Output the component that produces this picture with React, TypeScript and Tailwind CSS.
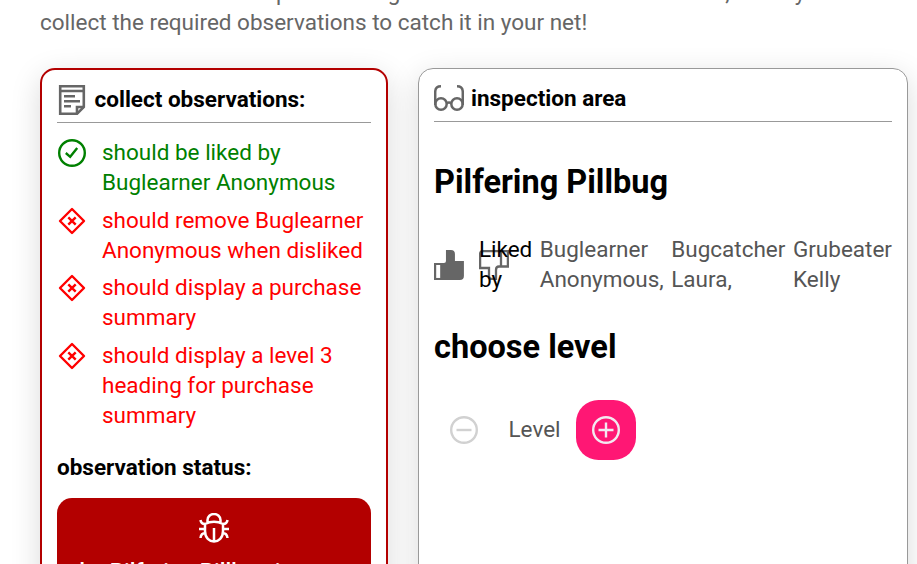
import React from "react";

const observations = [
  { ok: true, text: "should be liked by Buglearner Anonymous" },
  { ok: false, text: "should remove Buglearner Anonymous when disliked" },
  { ok: false, text: "should display a purchase summary" },
  { ok: false, text: "should display a level 3 heading for purchase summary" },
];

function Note() {
  return (
    <svg className="mt-px h-[30px] w-[30px] shrink-0" viewBox="0 0 30 30" fill="none" stroke="#666" strokeWidth="2.6">
      <path d="M3.2 1.2H26.8V22L20 28.8H3.2Z" />
      <path d="M3 6H27M7 11.2H18M7 16.2H23M7 21.2H14M20 29V22H27" />
    </svg>
  );
}

function Glasses() {
  return (
    <svg className="mt-[2px] h-[30px] w-[30px] shrink-0" viewBox="0 0 30 30" fill="none" stroke="#666" strokeWidth="2.5">
      <circle cx="7" cy="19" r="5.7" />
      <circle cx="23" cy="19" r="5.7" />
      <path d="M12.5 18Q15 17 17.5 18M1.2 20V7Q1.2 1.3 7 1.3M28.8 20V7Q28.8 1.3 23 1.3" />
    </svg>
  );
}

function StateIcon({ ok }: { ok: boolean }) {
  return ok ? (
    <svg className="h-[30px] w-[30px] shrink-0" viewBox="0 0 30 30" fill="none" stroke="currentColor" strokeWidth="2.4">
      <circle cx="15" cy="15" r="12.8" />
      <path d="M8.8 15L13.2 18.8L20.2 10" />
    </svg>
  ) : (
    <svg className="h-[30px] w-[30px] shrink-0" viewBox="0 0 30 30" fill="none" stroke="currentColor" strokeWidth="2.4" strokeLinejoin="round">
      <path d="M15 3L27 15L15 27L3 15ZM11.3 11.3L18.7 18.7M18.7 11.3L11.3 18.7" />
    </svg>
  );
}

function Bug() {
  return (
    <svg className="h-[30px] w-[30px] shrink-0" viewBox="0 0 30 30" fill="none" stroke="white" strokeWidth="2.5">
      <path d="M8.5 9V7A6.5 6 0 0 1 21.5 7V9M6 11Q15 6.5 24 11V18C24 32 6 32 6 18ZM15 15V29M6 16H0M24 16H30M6 11Q2 11 1.5 7M24 11Q28 11 28.5 7M6.5 20Q2 20 1.5 25M23.5 20Q28 20 28.5 25" />
    </svg>
  );
}

function ThumbUp() {
  return (
    <svg className="mt-[2px] h-[30px] w-[30px]" viewBox="0 0 30 30">
      <path d="M0 13H10Q12 13 12 11V0H17Q21 0 21 4V11H30V26Q30 30 26 30H0Z" fill="#666" />
      <path d="M2.2 15H6.2V28H2.2Z" fill="white" />
    </svg>
  );
}

function ThumbDown() {
  return (
    <svg className="mt-[2px] h-[30px] w-[30px]" viewBox="0 0 30 30" fill="none" stroke="#666" strokeWidth="2.3">
      <path d="M28.9 1.1H4Q1.1 1.1 1.1 4V18H10V26Q10 29 13 29H17V20Q17 16.5 20 16.5H28.9ZM22 1V16.5" />
    </svg>
  );
}

export default function App() {
  return (
    <div className="h-[564px] w-[917px] overflow-hidden bg-white font-['Roboto',sans-serif] text-[22.5px] leading-[30px] text-[#666]">
      <div className="-mt-[23px] ml-10 h-[60px] whitespace-nowrap">
        <div className="flex h-[30px]">
          <span className="ml-[236px]">p</span>
          <span className="ml-[99px]">g</span>
          <span className="ml-[325px]">,</span>
          <span className="ml-[65px]">y</span>
        </div>
        <p>collect the required observations to catch it in your net!</p>
      </div>
      <main className="ml-10 mt-[31px] flex h-[700px] gap-[30px]">
        <section className="w-[348px] shrink-0 rounded-[15px] border-2 border-[#b30000] p-[15px] pt-[14px] shadow-[0_8px_30px_rgba(0,0,0,0.15)]">
          <h2 className="flex h-[39px] gap-[7.5px] border-b border-[#999] font-bold text-black">
            <Note />
            <span>collect observations:</span>
          </h2>
          <ul className="mt-[14px] flex flex-col gap-[7.5px]">
            {observations.map((o) => (
              <li key={o.text} className={o.ok ? "flex gap-[15px] text-[green]" : "flex gap-[15px] text-[red]"}>
                <div className="h-[30px] shrink-0 pt-px">
                  <StateIcon ok={o.ok} />
                </div>
                <span>{o.text}</span>
              </li>
            ))}
          </ul>
          <h3 className="mt-[22px] font-bold text-black">observation status:</h3>
          <div className="mt-4 flex h-[150px] flex-col items-center rounded-[15px] bg-[#b30000] p-[15px] text-white">
            <Bug />
            <p className="mt-[13px] w-full font-medium">the Pilfering Pillbug is</p>
          </div>
        </section>
        <section className="w-[490px] shrink-0 rounded-[15px] border border-[#999] p-[15px] pt-[14px] shadow-[0_8px_30px_rgba(0,0,0,0.15)]">
          <h2 className="flex h-[39px] gap-[7px] border-b border-[#999] font-bold text-black">
            <Glasses />
            <span>inspection area</span>
          </h2>
          <h1 className="mt-[38px] text-[32.5px] leading-[45px] font-bold text-black">Pilfering Pillbug</h1>
          <div className="mt-[29px] flex h-[60px] items-center">
            <ThumbUp />
            <div className="relative ml-[15px] w-[61px]">
              <ThumbDown />
              <span className="absolute -top-[14px] left-0 text-black">Liked<br />by</span>
            </div>
            <div className="flex gap-[7.5px] whitespace-nowrap text-[#555]">
              <span>Buglearner<br />Anonymous,</span>
              <span>Bugcatcher<br />Laura,</span>
              <span>Grubeater<br />Kelly</span>
            </div>
          </div>
          <h1 className="mt-[31px] text-[32.5px] leading-[45px] font-bold text-black">choose level</h1>
          <div className="mt-[30px] flex items-center">
            <div className="flex h-[60px] w-[60px] items-center justify-center">
              <svg className="h-[30px] w-[30px]" viewBox="0 0 30 30" fill="none" stroke="#d1d1d1" strokeWidth="2.4">
                <circle cx="15" cy="15" r="12.8" />
                <path d="M7.5 15H22.5" />
              </svg>
            </div>
            <span className="-mt-[2px] ml-[14.5px] text-[#555]">Level</span>
            <button className="ml-[15.5px] flex h-[60px] w-[60px] items-center justify-center rounded-[22.5px] bg-[#ff1774]">
              <svg className="h-[30px] w-[30px]" viewBox="0 0 30 30" fill="none" stroke="#f3e9f0" strokeWidth="2.4">
                <circle cx="15" cy="15" r="12.8" />
                <path d="M7.5 15H22.5M15 7.5V22.5" />
              </svg>
            </button>
          </div>
        </section>
      </main>
    </div>
  );
}
